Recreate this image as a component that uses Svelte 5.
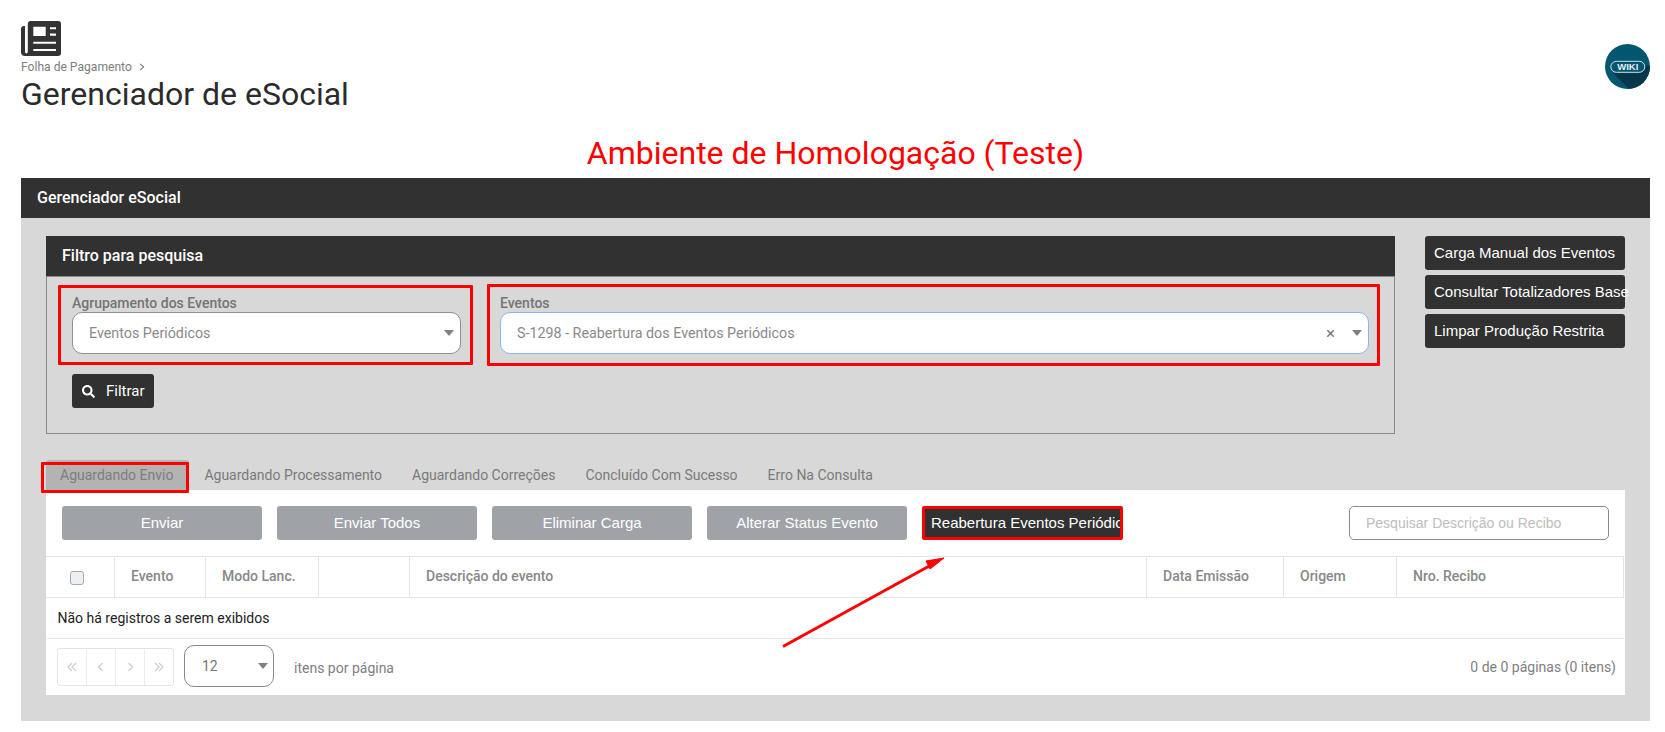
<script>
  const tabs = ['Aguardando Envio', 'Aguardando Processamento', 'Aguardando Correções', 'Concluído Com Sucesso', 'Erro Na Consulta'];
  const actions = ['Enviar', 'Enviar Todos', 'Eliminar Carga', 'Alterar Status Evento'];
  const sideButtons = ['Carga Manual dos Eventos', 'Consultar Totalizadores Base', 'Limpar Produção Restrita'];
  const columns = [
    { label: 'Evento', width: 91 },
    { label: 'Modo Lanc.', width: 113 },
    { label: '', width: 91 },
    { label: 'Descrição do evento', width: 737 },
    { label: 'Data Emissão', width: 137 },
    { label: 'Origem', width: 113 },
    { label: 'Nro. Recibo', width: 227 }
  ];
  const pagerIcons = [
    'M7 3L3 7l4 4M11 3L7 7l4 4',
    'M8.500 3L4.500 7l4 4',
    'M5.500 3l4 4-4 4',
    'M3 3l4 4-4 4M7 3l4 4-4 4'
  ];
</script>

<div class="page">
  <header class="top">
    <div class="title-block">
      <svg class="news" viewBox="0 0 40 35" aria-hidden="true">
        <path fill="#333" fill-rule="evenodd" d="M9.500 0H37a3 3 0 0 1 3 3v29a3 3 0 0 1-3 3H4a4 4 0 0 1-4-4V8a3 3 0 0 1 3-3h1v26a1.400 1.400 0 0 0 2.800 0V3A3 3 0 0 1 9.500 0zM12.300 5.700V15h12.400V5.700zM29 6.300v2h6v-2zM29 12.500v2.200h6v-2.200zM12.300 20.700v2h22.700v-2zM12.300 28v2h22.700v-2z"/>
      </svg>
      <div class="crumb">Folha de Pagamento
        <svg class="chev" viewBox="0 0 6 8" aria-hidden="true"><path d="M1 .8L4.600 4 1 7.200" fill="none" stroke="#7d7d7d" stroke-width="1.100"/></svg>
      </div>
      <h1>Gerenciador de eSocial</h1>
    </div>
    <svg class="wiki" viewBox="0 0 45 45" aria-label="Wiki">
      <defs><clipPath id="wc"><circle cx="22.500" cy="22.500" r="22.500"/></clipPath></defs>
      <circle cx="22.500" cy="22.500" r="22.500" fill="#02566f"/>
      <path clip-path="url(#wc)" d="M8 29l16 16h21V22l-6-1z" fill="#06374a"/>
      <rect x="5.800" y="17.300" width="34" height="11" rx="5.500" fill="#02566f" stroke="#d5e4e8" stroke-width="1"/>
      <text x="22.800" y="26.200" text-anchor="middle" class="wiki-text">WIKI</text>
    </svg>
  </header>

  <h2 class="env">Ambiente de Homologação (Teste)</h2>

  <section class="panel">
    <div class="panel-head">Gerenciador eSocial</div>
    <div class="panel-body">
      <div class="upper">
        <div class="filter">
          <div class="filter-head">Filtro para pesquisa</div>
          <div class="filter-body">
            <div class="fields">
              <div class="field first">
                <span class="label">Agrupamento dos Eventos</span>
                <div class="select"><span>Eventos Periódicos</span><i class="caret"></i></div>
              </div>
              <div class="field second">
                <span class="label">Eventos</span>
                <div class="select focused">
                  <span>S-1298 - Reabertura dos Eventos Periódicos</span>
                  <b class="clear">×</b><i class="caret"></i>
                </div>
              </div>
            </div>
            <button class="filter-btn">
              <svg viewBox="0 0 512 512" aria-hidden="true"><path fill="#fff" d="M505 442.700L405.300 343c-4.500-4.500-10.600-7-17-7H372c27.600-35.300 44-79.700 44-128C416 93.100 322.900 0 208 0S0 93.100 0 208s93.100 208 208 208c48.300 0 92.700-16.400 128-44v16.300c0 6.400 2.500 12.500 7 17l99.700 99.700c9.400 9.400 24.600 9.400 33.900 0l28.300-28.300c9.400-9.400 9.400-24.600.1-34zM208 336c-70.700 0-128-57.200-128-128 0-70.700 57.200-128 128-128 70.700 0 128 57.200 128 128 0 70.700-57.200 128-128 128z"/></svg>
              Filtrar
            </button>
          </div>
        </div>
        <div class="side">
          {#each sideButtons as label}
            <button class="side-btn">{label}</button>
          {/each}
        </div>
      </div>

      <nav class="tabs">
        {#each tabs as tab, i}
          <span class="tab" class:active={i === 0}>{tab}</span>
        {/each}
      </nav>

      <div class="content">
        <div class="toolbar">
          {#each actions as action}
            <button class="action">{action}</button>
          {/each}
          <button class="action reopen"><span>Reabertura Eventos Periódicos</span></button>
          <input class="search" placeholder="Pesquisar Descrição ou Recibo" />
        </div>

        <table>
          <thead>
            <tr>
              <th class="check"><span class="checkbox"></span></th>
              {#each columns as col}
                <th style="width:{col.width}px">{col.label}</th>
              {/each}
            </tr>
          </thead>
          <tbody>
            <tr><td colspan="8">Não há registros a serem exibidos</td></tr>
          </tbody>
        </table>

        <div class="pager">
          <div class="pages">
            {#each pagerIcons as d}
              <span><svg viewBox="0 0 15 14" aria-hidden="true"><path {d} fill="none" stroke="#cfcfcf" stroke-width="1.300"/></svg></span>
            {/each}
          </div>
          <div class="size"><span>12</span><i class="caret"></i></div>
          <span class="per-page">itens por página</span>
          <span class="count">0 de 0 páginas (0 itens)</span>
        </div>
      </div>
    </div>
  </section>

  <div class="mark mark-a"></div>
  <div class="mark mark-b"></div>
  <div class="mark mark-c"></div>
  <svg class="arrow" viewBox="0 0 1665 732" aria-hidden="true">
    <line x1="783" y1="646.500" x2="932" y2="564.500" stroke="#f00" stroke-width="3"/>
    <polygon points="944,558 930,569 926,561" fill="#f00" stroke="#f00" stroke-width="1"/>
  </svg>
</div>

<style>
  :global(body) { margin: 0; background: #fff; }
  .page {
    position: relative;
    width: 1665px;
    height: 732px;
    overflow: hidden;
    padding: 21px 15px 0 21px;
    box-sizing: border-box;
    font-family: Roboto, "Liberation Sans", sans-serif;
  }
  .top { display: flex; justify-content: space-between; align-items: flex-start; height: 101px; }
  .title-block { display: flex; flex-direction: column; }
  .news { width: 40px; height: 35px; display: block; }
  .crumb { font-size: 12.100px; line-height: 14px; color: #7d7d7d; margin-top: 4px; }
  .chev { width: 6px; height: 8px; margin-left: 4px; }
  h1 { margin: 1px 0 0; font-weight: 400; font-size: 32px; line-height: 38px; color: #2b2b2b; }
  .wiki { width: 45px; height: 45px; margin-top: 23px; display: block; }
  .wiki-text { font: 700 9.500px "Liberation Sans", sans-serif; fill: #e8f0f2; }
  .env {
    margin: 12px 0 0;
    height: 44px;
    text-align: center;
    font-weight: 400;
    font-size: 32px;
    line-height: 38px;
    color: #f00;
  }
  .panel { background: #d8d8d8; height: 543px; }
  .panel-head {
    height: 40px;
    line-height: 39px;
    padding-left: 16px;
    background: #313131;
    color: #fff;
    font-weight: 500;
    font-size: 16px;
  }
  .panel-body { padding: 18px 25px 0; }
  .upper { display: flex; gap: 30px; }
  .filter { width: 1349px; flex: none; }
  .filter-head {
    height: 40px;
    line-height: 39px;
    padding-left: 16px;
    background: #313131;
    color: #fff;
    font-weight: 500;
    font-size: 16px;
  }
  .filter-body {
    height: 158px;
    box-sizing: border-box;
    border: 1px solid #8a8a8a;
    padding: 17px 25px 0;
  }
  .fields { display: flex; gap: 39px; }
  .field { display: flex; flex-direction: column; }
  .first { width: 389px; }
  .second { width: 869px; }
  .label { font-size: 14px; line-height: 18px; font-weight: 500; color: #757575; }
  .select {
    position: relative;
    display: flex;
    align-items: center;
    height: 42px;
    box-sizing: border-box;
    background: #fff;
    border: 1px solid #8f8f8f;
    border-radius: 10px;
    padding-left: 16px;
    font-size: 14.300px;
    color: #8a8a8a;
  }
  .select.focused { border-color: #86b7f0; }
  .clear {
    position: absolute;
    right: 33px;
    font-weight: 400;
    font-size: 17px;
    color: #777;
  }
  .caret {
    position: absolute;
    right: 6px;
    top: 17px;
    width: 0;
    height: 0;
    border-left: 5.500px solid transparent;
    border-right: 5.500px solid transparent;
    border-top: 6px solid #808080;
  }
  .filter-btn {
    display: flex;
    align-items: center;
    gap: 11px;
    width: 82px;
    height: 34px;
    margin-top: 20px;
    padding: 0 0 0 10px;
    background: #313131;
    border: 0;
    border-radius: 3px;
    color: #fff;
    font: 400 15px Roboto, sans-serif;
  }
  .filter-btn svg { width: 13px; height: 13px; }
  .side { display: flex; flex-direction: column; gap: 5px; width: 200px; }
  .side-btn {
    height: 34px;
    padding: 0 0 2px 9px;
    background: #313131;
    border: 0;
    border-radius: 3px;
    color: #fff;
    text-align: left;
    white-space: nowrap;
    font: 400 15px "Liberation Sans", Arial, sans-serif;
  }
  .tabs { display: flex; height: 30px; margin-top: 26px; }
  .tab {
    padding: 0 15px 0 14px;
    margin-right: 1px;
    line-height: 30px;
    font-size: 14px;
    color: #7a7a7a;
  }
  .tab.active { padding-right: 16px; background: #b3b3b3; border-radius: 3px 3px 0 0; color: #7d7d7d; }
  .content { background: #fff; width: 1579px; height: 205px; }
  .toolbar { display: flex; gap: 15px; padding: 16px; height: 34px; }
  .action {
    flex: none;
    width: 200px;
    height: 34px;
    padding: 0 0 2px;
    border: 0;
    border-radius: 3px;
    background: #9fa3a8;
    color: #fff;
    font: 400 15px "Liberation Sans", Arial, sans-serif;
  }
  .reopen {
    width: 201px;
    box-sizing: border-box;
    border: 3px solid #f00;
    background: #313131;
    border-radius: 2px;
    padding: 0 0 2px 6px;
    text-align: left;
    overflow: hidden;
    white-space: nowrap;
  }
  .search {
    margin-left: auto;
    width: 260px;
    height: 34px;
    box-sizing: border-box;
    border: 1px solid #8a8a8a;
    border-radius: 5px;
    padding: 0 16px;
    font: 400 14px "Liberation Sans", Arial, sans-serif;
    outline: none;
  }
  .search::placeholder { color: #bdbdbd; opacity: 1; }
  table {
    width: 1577px;
    table-layout: fixed;
    border-collapse: collapse;
    font-size: 14px;
  }
  th {
    height: 41px;
    box-sizing: border-box;
    padding: 0 0 2px 16px;
    text-align: left;
    font-weight: 500;
    color: #888;
    border: 1px solid #e4e4e8;
  }
  th.check { width: 68px; padding: 2px 0 0 23px; border-left-color: #fff; }
  .checkbox {
    display: block;
    width: 14px;
    height: 14px;
    box-sizing: border-box;
    background: #eceff3;
    border: 1px solid #a5a8ad;
    border-radius: 3px;
  }
  td {
    height: 41px;
    box-sizing: border-box;
    padding: 0 0 0 11px;
    color: #212121;
    border-bottom: 1px solid #e4e4e8;
  }
  .pager { display: flex; align-items: center; height: 57px; margin-top: -1px; padding: 0 9px 0 11px; font-size: 14px; color: #808080; }
  .pages { display: flex; width: 117px; height: 38px; box-sizing: border-box; border: 1px solid #e4e4e4; border-radius: 3px; }
  .pages span {
    flex: 1;
    display: flex;
    align-items: center;
    justify-content: center;
    border-right: 1px solid #ececec;
  }
  .pages span:last-child { border-right: 0; }
  .pages svg { width: 15px; height: 14px; }
  .size {
    position: relative;
    display: flex;
    align-items: center;
    width: 90px;
    height: 42px;
    box-sizing: border-box;
    margin: -1px 0 0 10px;
    padding-left: 17px;
    border: 1px solid #8a8a8a;
    border-radius: 10px;
    color: #757575;
  }
  .size .caret { right: 5px; top: 17px; }
  .per-page { margin-left: 20px; margin-top: 3px; }
  .count { margin-left: auto; margin-top: 1px; }

  .mark { position: absolute; box-sizing: border-box; border: 3px solid #f00; border-radius: 1px; pointer-events: none; }
  .mark-a { left: 58px; top: 285px; width: 415px; height: 80px; }
  .mark-b { left: 487px; top: 284px; width: 893px; height: 82px; }
  .mark-c { left: 41px; top: 462px; width: 148px; height: 31px; }
  .arrow { position: absolute; left: 0; top: 0; width: 1665px; height: 732px; pointer-events: none; }
</style>
